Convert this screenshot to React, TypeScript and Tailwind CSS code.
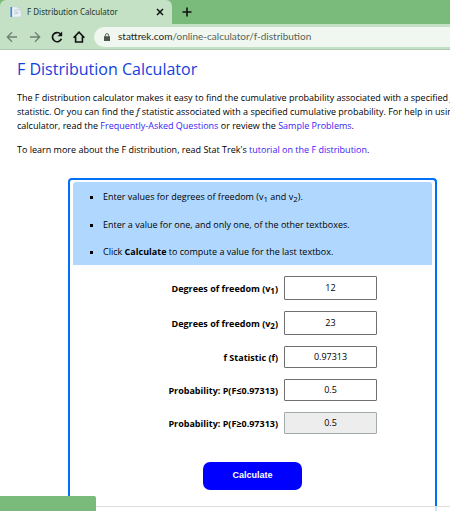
import { useState, type ReactNode } from "react";

type Field = { id: string; label: ReactNode; value: string; height: string; disabled?: boolean };

const FIELDS: Field[] = [
  { id: "v1", label: <>Degrees of freedom (v<Sub>1</Sub>)</>, value: "12", height: "h-6" },
  { id: "v2", label: <>Degrees of freedom (v<Sub>2</Sub>)</>, value: "23", height: "h-6" },
  { id: "f", label: "f Statistic (f)", value: "0.97313", height: "h-[22px]" },
  { id: "p-le", label: "Probability: P(F≤0.97313)", value: "0.5", height: "h-[22px]" },
  { id: "p-ge", label: "Probability: P(F≥0.97313)", value: "0.5", height: "h-[22px]", disabled: true },
];

function Sub({ children }: { children: ReactNode }) {
  return <sub className="text-[8px]">{children}</sub>;
}

function Link({ children }: { children: ReactNode }) {
  return <a href="#" className="text-[#3a22f5]">{children}</a>;
}

function PageIcon() {
  return (
    <svg viewBox="0 0 12 12" className="size-3 shrink-0">
      <path d="M1 1h7l3 3v7H1z" fill="#edf3f5" stroke="#c3d2da" strokeWidth=".6" />
      <path d="M.5 1h1.6v10H.5z" fill="#3d86e8" />
      <path d="M8 1v3h3" fill="none" stroke="#b4c2cc" strokeWidth=".7" />
      <path d="M4 4h3M4 6h4M4 9l2-2 1 1 2-2" fill="none" stroke="#a9bcc8" strokeWidth=".7" />
    </svg>
  );
}

function Arrow({ flip }: { flip?: boolean }) {
  return (
    <svg viewBox="0 0 12 12" className={flip ? "size-3 rotate-180" : "size-3"} fill="none" stroke="#6f7f71" strokeWidth="1.3">
      <path d="M11 6H1.5M6 1.3L1.3 6 6 10.7" />
    </svg>
  );
}

function Browser() {
  return (
    <header className="shrink-0 bg-[#7aba7b]">
      <div className="flex h-6 items-stretch">
        <div className="flex w-[172px] items-center rounded-t-md bg-[#c4e1c5] pr-2 pl-[10px]">
          <PageIcon />
          <span className="ml-[5px] flex-1 font-['Noto_Sans',sans-serif] text-[8px] whitespace-nowrap text-[#27352a]">
            F Distribution Calculator
          </span>
          <button aria-label="Close tab">
            <svg viewBox="0 0 8 8" className="size-2" stroke="#111" strokeWidth="1.5">
              <path d="M1 1l6 6M7 1L1 7" />
            </svg>
          </button>
        </div>
        <button aria-label="New tab" className="ml-[10px]">
          <svg viewBox="0 0 10 10" className="size-[10px]" stroke="#111" strokeWidth="1.6">
            <path d="M5 .5v9M.5 5h9" />
          </svg>
        </button>
      </div>
      <div className="flex h-[26px] items-center border-b border-[#afc8b0] bg-[#c4e1c5] pl-[6px]">
        <button aria-label="Back"><Arrow /></button>
        <button aria-label="Forward" className="ml-[11px]"><Arrow flip /></button>
        <button aria-label="Reload" className="ml-[10px]">
          <svg viewBox="0 0 12 12" className="size-3" fill="none" stroke="#111" strokeWidth="1.7">
            <path d="M10.4 7.8A4.6 4.6 0 1 1 9.4 2.9" />
            <path d="M11.2 .5V5.2H6.5z" fill="#111" stroke="none" />
          </svg>
        </button>
        <button aria-label="Home" className="ml-[10px]">
          <svg viewBox="0 0 12 12" className="size-3" fill="none" stroke="#111" strokeWidth="1.6">
            <path d="M.6 6.8L6 1.2l5.4 5.6M2.6 5.6v5.4h6.8V5.6" />
          </svg>
        </button>
        <div className="ml-[9px] flex h-5 flex-1 items-center rounded-l-full bg-[#eff7f0] pl-[10px] font-['Lato',sans-serif] text-[10px] whitespace-nowrap text-[#58635a]">
          <svg viewBox="0 0 6 8" className="mr-2 h-2 w-[6px]">
            <path d="M1.4 3.5V2.2a1.6 1.6 0 0 1 3.2 0v1.3" fill="none" stroke="#4b564d" strokeWidth=".9" />
            <path d="M0 3.2h6V8H0z" fill="#4b564d" />
          </svg>
          <span className="text-[#1f2721]">stattrek.com</span>/online-calculator/f-distribution
        </div>
      </div>
    </header>
  );
}

function Calculator() {
  const [values, setValues] = useState(() => FIELDS.map((f) => f.value));

  return (
    <form
      onSubmit={(e) => e.preventDefault()}
      className="mt-[21px] mr-[13px] ml-[51px] flex-1 rounded-t-[4px] border-2 border-b-0 border-[#0070f8] px-[3px] pt-[2px]"
    >
      <ul className="flex h-[83px] list-[square] flex-col justify-between rounded-t-[3px] bg-[#b0d8ff] pt-[7px] pb-[5px] pl-[30px] text-[9px] leading-4">
        <li>Enter values for degrees of freedom (v<Sub>1</Sub> and v<Sub>2</Sub>).</li>
        <li>Enter a value for one, and only one, of the other textboxes.</li>
        <li>Click <b>Calculate</b> to compute a value for the last textbox.</li>
      </ul>
      <div className="mt-[11px] mr-[55px] flex flex-col gap-[11px]">
        {FIELDS.map((f, i) => (
          <div key={f.id} className="flex items-center justify-end gap-[6px]">
            <label htmlFor={f.id} className="pt-[2px] text-[9px] leading-4 font-bold whitespace-nowrap">{f.label}</label>
            <input
              id={f.id}
              value={values[i]}
              disabled={f.disabled}
              onChange={(e) => setValues(values.map((v, j) => (j === i ? e.target.value : v)))}
              className={`${f.height} w-[93px] rounded-[1px] border border-[#6d7070] bg-white pb-[2px] text-center text-[9px] disabled:border-[#a3abab] disabled:bg-[#ededed]`}
            />
          </div>
        ))}
      </div>
      <div className="mt-7 flex justify-center">
        <button className="h-7 w-[99px] rounded-[7px] bg-[#0000ff] pb-px font-['Liberation_Sans',sans-serif] text-[9px] font-bold text-white">
          Calculate
        </button>
      </div>
    </form>
  );
}

export default function App() {
  return (
    <div className="relative flex h-screen flex-col overflow-hidden bg-white font-['Open_Sans',sans-serif] text-black">
      <Browser />
      <main className="flex flex-1 flex-col pl-[17px]">
        <h1 className="mt-[7px] text-[16px] leading-6 text-[#1440dc]">F Distribution Calculator</h1>
        <p className="mt-[10px] text-[9px] leading-[14px] whitespace-nowrap">
          The F distribution calculator makes it easy to find the cumulative probability associated with a specified <i>f</i>
          <br />
          statistic. Or you can find the <i>f</i> statistic associated with a specified cumulative probability. For help in using
          <br />
          calculator, read the <Link>Frequently-Asked Questions</Link> or review the <Link>Sample Problems</Link>.
        </p>
        <p className="mt-[10px] text-[9px] leading-[14px] whitespace-nowrap">
          To learn more about the F distribution, read Stat Trek's <Link>tutorial on the F distribution</Link>.
        </p>
        <Calculator />
      </main>
      <div className="absolute inset-x-0 bottom-0 h-[5px] border-t border-[#dedede] bg-white/80" />
      <div className="absolute bottom-0 left-0 h-[15px] w-24 rounded-tr-[2px] bg-[#7aba7b]" />
    </div>
  );
}
